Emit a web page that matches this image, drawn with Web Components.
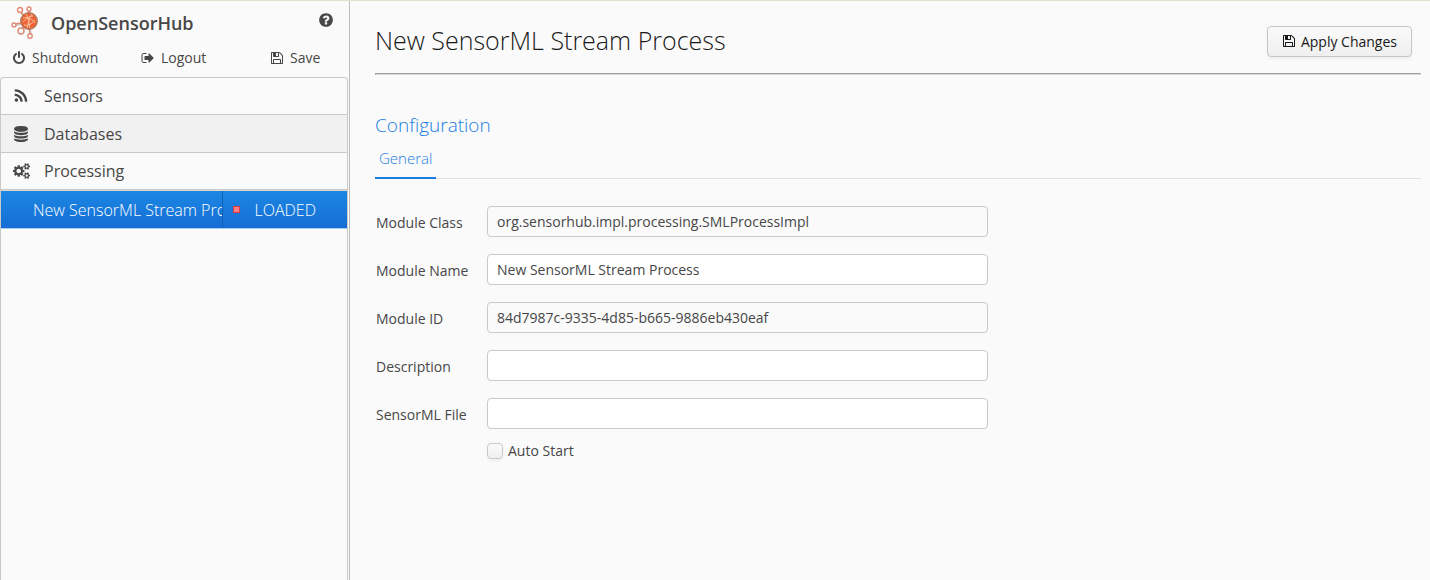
<!DOCTYPE html>
<html lang="en">
<head>
<meta charset="utf-8">
<title>OpenSensorHub</title>
<style>
  html, body {
    height: 100%;
  }

  body {
    margin: 0;
    font-family: "Open Sans", "Noto Sans", sans-serif;
    font-size: 14px;
    color: #474747;
    background: #fafafa;
    --border-color: #c9c9c9;
    --accent: #197de1;
  }
</style>
</head>
<body>
<hub-app>
  <hub-sidebar slot="sidebar" title="OpenSensorHub">
    <hub-section icon="rss" label="Sensors"></hub-section>
    <hub-section icon="database" label="Databases" shaded></hub-section>
    <hub-section icon="cogs" label="Processing">
      <hub-module-list name="New SensorML Stream Process" state="LOADED"></hub-module-list>
    </hub-section>
  </hub-sidebar>

  <hub-page-header title="New SensorML Stream Process"></hub-page-header>
  <hub-tabs title="Configuration" tab="General">
    <hub-field label="Module Class" value="org.sensorhub.impl.processing.SMLProcessImpl" readonly></hub-field>
    <hub-field label="Module Name" value="New SensorML Stream Process"></hub-field>
    <hub-field label="Module ID" value="84d7987c-9335-4d85-b665-9886eb430eaf" readonly></hub-field>
    <hub-field label="Description"></hub-field>
    <hub-field label="SensorML File"></hub-field>
    <hub-checkbox label="Auto Start"></hub-checkbox>
  </hub-tabs>
</hub-app>

<script>
// Icon shapes: [viewBox width, path]. All of them are 1792 units tall.
const ICONS = {
  power: [1792, "M1664 896q0 156-61 298t-164 245-245 164-298 61-298-61-245-164-164-245-61-298q0-182 80.5-343t226.5-270q43-32 95.5-25t83.5 50q32 42 24.5 94.5t-49.5 84.5q-98 74-151.5 181t-53.5 228q0 104 40.5 198.5t109.5 163.5 163.5 109.5 198.5 40.5 198.5-40.5 163.5-109.5 109.5-163.5 40.5-198.5q0-121-53.5-228t-151.5-181q-42-32-49.5-84.5t24.5-94.5q31-43 84-50t95 25q146 109 226.5 270t80.5 343zm-640-768v640q0 52-38 90t-90 38-90-38-38-90v-640q0-52 38-90t90-38 90 38 38 90z"],
  logout: [1792, "M704 1440q0 4 1 20t.5 26.5-3 23.5-10 19.5-20.5 6.5h-320q-119 0-203.5-84.5t-84.5-203.5v-704q0-119 84.5-203.5t203.5-84.5h320q13 0 22.5 9.5t9.5 22.5q0 4 1 20t.5 26.5-3 23.5-10 19.5-20.5 6.5h-320q-66 0-113 47t-47 113v704q0 66 47 113t113 47h312l11.5 1 11.5 3 8 5.5 7 9 2 13.5zm928-544q0 26-19 45l-544 544q-19 19-45 19t-45-19-19-45v-288h-448q-26 0-45-19t-19-45v-384q0-26 19-45t45-19h448v-288q0-26 19-45t45-19 45 19l544 544q19 19 19 45z"],
  save: [1792, "M512 1536h768v-384h-768v384zm896 0h128v-896q0-14-10-38.5t-20-34.5l-281-281q-10-10-34-20t-39-10v416q0 40-28 68t-68 28h-576q-40 0-68-28t-28-68v-416h-128v1280h128v-416q0-40 28-68t68-28h832q40 0 68 28t28 68v416zm-384-928v-320q0-13-9.5-22.5t-22.5-9.5h-192q-13 0-22.5 9.5t-9.5 22.5v320q0 13 9.5 22.5t22.5 9.5h192q13 0 22.5-9.5t9.5-22.5zm640 32v928q0 40-28 68t-68 28h-1344q-40 0-68-28t-28-68v-1344q0-40 28-68t68-28h928q40 0 88 20t76 48l280 280q28 28 48 76t20 88z"],
  help: [1792, "M1024 1376v-192q0-14-9-23t-23-9h-192q-14 0-23 9t-9 23v192q0 14 9 23t23 9h192q14 0 23-9t9-23zm256-672q0-88-55.5-163t-138.5-116-170-41q-243 0-371 213-15 24 8 42l132 100q7 6 19 6 16 0 25-12 53-68 86-92 34-24 86-24 48 0 85.5 26t37.5 59q0 38-20 61t-68 45q-63 28-115.5 86.5t-52.5 125.5v36q0 14 9 23t23 9h192q14 0 23-9t9-23q0-19 21.5-49.5t54.5-49.5q32-18 49-28.5t46-35 44.5-48 28-60.5 12.5-81zm384 192q0 209-103 385.5t-279.5 279.5-385.5 103-385.5-103-279.5-279.5-103-385.5 103-385.5 279.5-279.5 385.5-103 385.5 103 279.5 279.5 103 385.5z"],
  rss: [1792, "M576 1344q0 80-56 136t-136 56-136-56-56-136 56-136 136-56 136 56 56 136zm512 123q2 28-17 48-18 21-47 21h-135q-25 0-43-16.5t-20-41.5q-22-229-184.5-391.5t-391.5-184.5q-25-2-41.5-20t-16.5-43v-135q0-29 21-47 17-17 43-17h5q160 13 306 80.5t259 181.5q114 113 181.5 259t80.5 306zm512 2q2 27-18 47-18 20-46 20h-143q-26 0-44.5-17.5t-19.5-42.5q-12-215-101-408.5t-231.5-336-336-231.5-408.5-102q-25-1-42.5-19.5t-17.5-43.5v-143q0-28 20-46 18-18 44-18h3q262 13 501.5 120t425.5 294q187 186 294 425.5t120 501.5z"],
  database: [1792, "M896 768q237 0 443-43t325-127v170q0 69-103 128t-280 93.5-385 34.5-385-34.5-280-93.5-103-128v-170q119 84 325 127t443 43zm0 768q237 0 443-43t325-127v170q0 69-103 128t-280 93.5-385 34.5-385-34.5-280-93.5-103-128v-170q119 84 325 127t443 43zm0-384q237 0 443-43t325-127v170q0 69-103 128t-280 93.5-385 34.5-385-34.5-280-93.5-103-128v-170q119 84 325 127t443 43zm0-1152q208 0 385 34.5t280 93.5 103 128v128q0 69-103 128t-280 93.5-385 34.5-385-34.5-280-93.5-103-128v-128q0-69 103-128t280-93.5 385-34.5z"],
  cogs: [1920, "M896 896q0-106-75-181t-181-75-181 75-75 181 75 181 181 75 181-75 75-181zm768 512q0-52-38-90t-90-38-90 38-38 90q0 53 37.5 90.5t90.5 37.5 90.5-37.5 37.5-90.5zm0-1024q0-52-38-90t-90-38-90 38-38 90q0 53 37.5 90.5t90.5 37.5 90.5-37.5 37.5-90.5zm-384 421v185q0 10-7 19.5t-16 10.5l-155 24q-11 35-32 76 34 48 90 115 7 11 7 20 0 12-7 19-23 30-82.5 89.5t-78.5 59.5q-11 0-21-7l-115-90q-37 19-77 31-11 108-23 155-7 24-30 24h-186q-11 0-20-7.5t-10-17.5l-23-153q-34-10-75-31l-118 89q-7 7-20 7-11 0-21-8-144-133-144-160 0-9 7-19 10-14 41-53t47-61q-23-44-35-82l-152-24q-10-1-17-9.5t-7-19.5v-185q0-10 7-19.5t16-10.5l155-24q11-35 32-76-34-48-90-115-7-11-7-20 0-12 7-20 22-30 82-89t79-59q11 0 21 7l115 90q34-18 77-32 11-108 23-154 7-24 30-24h186q11 0 20 7.5t10 17.5l23 153q34 10 75 31l118-89q8-7 20-7 11 0 21 8 144 133 144 160 0 8-7 19-12 16-42 54t-45 60q23 48 34 82l152 23q10 2 17 10.5t7 19.5zm640 533v140q0 16-149 31-12 27-30 52 51 113 51 138 0 4-4 7-122 71-124 71-8 0-46-47t-52-68q-20 2-30 2t-30-2q-14 21-52 68t-46 47q-2 0-124-71-4-3-4-7 0-25 51-138-18-25-30-52-149-15-149-31v-140q0-16 149-31 13-29 30-52-51-113-51-138 0-4 4-7 4-2 35-20t59-34 30-16q8 0 46 46.5t52 67.5q20-2 30-2t30 2q51-71 92-112l6-2q4 0 124 70 4 3 4 7 0 25-51 138 17 23 30 52 149 15 149 31zm0-1024v140q0 16-149 31-12 27-30 52 51 113 51 138 0 4-4 7-122 71-124 71-8 0-46-47t-52-68q-20 2-30 2t-30-2q-14 21-52 68t-46 47q-2 0-124-71-4-3-4-7 0-25 51-138-18-25-30-52-149-15-149-31v-140q0-16 149-31 13-29 30-52-51-113-51-138 0-4 4-7 4-2 35-20t59-34 30-16q8 0 46 46.5t52 67.5q20-2 30-2t30 2q51-71 92-112l6-2q4 0 124 70 4 3 4 7 0 25-51 138 17 23 30 52 149 15 149 31z"]
};

/** Base class: renders the result of template() into an open shadow root. */
class HubElement extends HTMLElement {
  constructor() {
    super();
    this.attachShadow({ mode: "open" });
  }

  connectedCallback() {
    this.shadowRoot.innerHTML = this.template();
  }

  attr(name) {
    return this.getAttribute(name) || "";
  }
}

/** Icon, sized with --icon-size. */
class HubIcon extends HubElement {
  template() {
    const [width, path] = ICONS[this.attr("name")];
    return `
      <style>
        :host { display: inline-flex; flex: none; }
        svg { display: block; height: var(--icon-size, 14px); fill: currentColor; }
      </style>
      <svg viewBox="0 0 ${width} 1792" aria-hidden="true"><path d="${path}"/></svg>
    `;
  }
}

class HubLogo extends HubElement {
  template() {
    return `
      <style>
        :host { display: block; flex: none; }
        svg { display: block; width: 30px; height: 34px; }
      </style>
      <svg viewBox="0 0 30 34" aria-hidden="true">
        <g fill="none" stroke="#b9b3ae" stroke-width="2" opacity=".6">
          <path d="M11 7l4 5M20 5l-1 6M6 19l6-1M12 24l3-4M21 29l-1-6"/>
        </g>
        <g fill="#fafafa" stroke="#df8a74" stroke-width="1.4">
          <path d="M11 6l4 5M19 5l-1 5M5 18l6-1M12 23l3-3M20 28l-1-6"/>
          <circle cx="10" cy="4" r="2.500"/>
          <circle cx="19" cy="3" r="2"/>
          <circle cx="4" cy="19" r="2"/>
          <circle cx="11" cy="25" r="3"/>
          <circle cx="20" cy="30" r="2.200"/>
        </g>
        <circle cx="19" cy="15" r="8.300" fill="#ec6436" stroke="#a8785f" stroke-width="1.200"/>
        <g fill="none" stroke="#ffc9a8" stroke-width=".9">
          <path d="M13 12c4-1 8 0 12 5M14 19c3 1 7 0 11-5M16 8c3 4 3 9 1 14M22 8c-3 4-4 9-2 14M13 16c4-4 7-6 10-6"/>
        </g>
      </svg>
    `;
  }
}

/** Flat icon + text button of the sidebar toolbar. */
class HubLink extends HubElement {
  template() {
    return `
      <style>
        :host { display: block; }
        button {
          display: flex;
          align-items: center;
          gap: 6px;
          padding: 0;
          border: 0;
          background: none;
          font: inherit;
          line-height: 20px;
          color: inherit;
        }
      </style>
      <button type="button"><hub-icon name="${this.attr("icon")}"></hub-icon>${this.attr("label")}</button>
    `;
  }
}

/** Page frame: sidebar on the left, default slot in the content area. */
class HubApp extends HubElement {
  template() {
    return `
      <style>
        :host {
          display: flex;
          box-sizing: border-box;
          min-height: 100%;
          border-top: 1px solid #dbe4d0;
        }
        aside {
          display: flex;
          flex: 0 0 349px;
          border-right: 1px solid #bdbdbd;
        }
        ::slotted(hub-sidebar) { flex: 1; min-width: 0; }
        main {
          flex: 1;
          min-width: 0;
          padding: 16px 9px 16px 25px;
        }
      </style>
      <aside><slot name="sidebar"></slot></aside>
      <main><slot></slot></main>
    `;
  }
}

class HubSidebar extends HubElement {
  template() {
    return `
      <style>
        :host { display: flex; flex-direction: column; }
        header {
          display: flex;
          align-items: center;
          gap: 11px;
          height: 36px;
          margin-top: 4px;
          padding: 0 15px 0 10px;
        }
        h1 { flex: 1; margin: 0; font-size: 18px; font-weight: 600; line-height: 24px; }
        .help {
          align-self: flex-start;
          margin-top: 7px;
          padding: 0;
          border: 0;
          background: none;
          color: inherit;
          --icon-size: 16px;
        }
        .toolbar {
          display: grid;
          grid-template-columns: 129px 129px auto;
          margin: 7px 0 9px;
          padding-left: 12px;
        }
        nav {
          flex: 1;
          margin-right: 1px;
          border: 1px solid var(--border-color);
          border-bottom: 0;
          border-radius: 4px 4px 0 0;
        }
      </style>
      <header>
        <hub-logo></hub-logo>
        <h1>${this.attr("title")}</h1>
        <button class="help" type="button" aria-label="Help"><hub-icon name="help"></hub-icon></button>
      </header>
      <div class="toolbar">
        <hub-link icon="power" label="Shutdown"></hub-link>
        <hub-link icon="logout" label="Logout"></hub-link>
        <hub-link icon="save" label="Save"></hub-link>
      </div>
      <nav><slot></slot></nav>
    `;
  }
}

/** Accordion section; its content goes below the caption. */
class HubSection extends HubElement {
  template() {
    return `
      <style>
        :host { display: block; }
        button {
          display: flex;
          align-items: center;
          width: 100%;
          height: 37px;
          padding: 0 12px;
          border: 0;
          border-bottom: 1px solid var(--border-color);
          background: none;
          font: inherit;
          font-size: 16px;
          color: inherit;
          --icon-size: 16px;
        }
        :host([shaded]) button { height: 38px; background: #f1f1f1; }
        .icon { flex: 0 0 31px; display: flex; }
      </style>
      <button type="button"><span class="icon"><hub-icon name="${this.attr("icon")}"></hub-icon></span>${this.attr("label")}</button>
      <slot></slot>
    `;
  }
}

class HubModuleList extends HubElement {
  template() {
    return `
      <style>
        :host { display: block; border-top: 1px solid #dcd8d2; border-bottom: 1px solid #a9cdf0; }
        table {
          width: 100%;
          table-layout: fixed;
          border-collapse: collapse;
          font-size: 16px;
          font-weight: 300;
          color: #fff;
        }
        tr { height: 37px; background: linear-gradient(#1b87e3, #166ed5); }
        td { padding: 0; overflow: hidden; white-space: nowrap; }
        .name { padding-left: 32px; }
        .state { width: 125px; border-left: 1px solid #1461b4; box-sizing: border-box; }
        .status { display: flex; align-items: center; gap: 15px; padding-left: 10px; }
        .dot {
          width: 7px;
          height: 7px;
          box-sizing: border-box;
          border: 1px solid #d93a45;
          background: #f58088;
        }
      </style>
      <table>
        <tbody>
          <tr>
            <td class="name">${this.attr("name")}</td>
            <td class="state"><div class="status"><span class="dot"></span>${this.attr("state")}</div></td>
          </tr>
        </tbody>
      </table>
    `;
  }
}

class HubPageHeader extends HubElement {
  template() {
    return `
      <style>
        :host { display: block; }
        .bar {
          display: flex;
          align-items: center;
          justify-content: space-between;
          height: 48px;
          padding-right: 9px;
        }
        h2 { margin: 0; padding-bottom: 2px; font-size: 25px; font-weight: 300; color: #191919; }
        button {
          display: flex;
          align-items: center;
          gap: 5px;
          height: 31px;
          padding: 0 14px;
          border: 1px solid #c5c5c5;
          border-radius: 4px;
          background: linear-gradient(#fafafa, #efefef);
          box-shadow: 0 2px 3px rgba(0, 0, 0, .05);
          font: inherit;
          color: #191919;
        }
        hr {
          margin: 8px 0 0;
          border: 1px solid;
          border-color: #9f9f9f #d8d8d8 #d8d8d8 #9f9f9f;
        }
      </style>
      <div class="bar">
        <h2>${this.attr("title")}</h2>
        <button type="button"><hub-icon name="save"></hub-icon>Apply Changes</button>
      </div>
      <hr>
    `;
  }
}

/** Titled tab sheet holding the form. */
class HubTabs extends HubElement {
  template() {
    return `
      <style>
        :host { display: block; margin-top: 36px; }
        h3 { margin: 0; font-size: 19px; font-weight: 300; line-height: 28px; color: var(--accent); }
        .tabs { display: flex; margin-top: 4px; border-bottom: 1px solid #dfdfdf; }
        .tab {
          height: 36px;
          margin-bottom: -1px;
          padding: 0 4px 4px;
          border: 0;
          border-bottom: 2px solid var(--accent);
          background: none;
          font: inherit;
          font-size: 15px;
          font-weight: 300;
          color: var(--accent);
        }
        form { display: grid; gap: 17px; margin-top: 27px; }
      </style>
      <h3>${this.attr("title")}</h3>
      <div class="tabs" role="tablist">
        <button class="tab" type="button" role="tab" aria-selected="true">${this.attr("tab")}</button>
      </div>
      <form><slot></slot></form>
    `;
  }
}

/** Labelled text box. */
class HubField extends HubElement {
  template() {
    const readonly = this.hasAttribute("readonly") ? "readonly" : "";
    return `
      <style>
        :host {
          display: grid;
          grid-template-columns: 112px minmax(0, 501px);
          align-items: center;
        }
        label { padding: 2px 0 0 1px; }
        input {
          box-sizing: border-box;
          width: 100%;
          height: 31px;
          padding: 0 9px 1px;
          border: 1px solid var(--border-color);
          border-radius: 4px;
          background: #fff;
          font: inherit;
          color: inherit;
        }
        input[readonly] { background: #fafafa; }
      </style>
      <label for="input">${this.attr("label")}</label>
      <input id="input" type="text" value="${this.attr("value")}" ${readonly}>
    `;
  }
}

class HubCheckbox extends HubElement {
  template() {
    return `
      <style>
        :host { display: block; margin-top: -5px; padding-left: 112px; }
        label { display: inline-flex; align-items: center; gap: 5px; line-height: 20px; }
        input {
          appearance: none;
          width: 16px;
          height: 16px;
          margin: 0;
          border: 1px solid var(--border-color);
          border-radius: 4px;
          background: linear-gradient(#fafafa, #efefef);
          box-shadow: 0 2px 3px rgba(0, 0, 0, .05);
        }
      </style>
      <label><input type="checkbox">${this.attr("label")}</label>
    `;
  }
}

customElements.define("hub-icon", HubIcon);
customElements.define("hub-logo", HubLogo);
customElements.define("hub-link", HubLink);
customElements.define("hub-app", HubApp);
customElements.define("hub-sidebar", HubSidebar);
customElements.define("hub-section", HubSection);
customElements.define("hub-module-list", HubModuleList);
customElements.define("hub-page-header", HubPageHeader);
customElements.define("hub-tabs", HubTabs);
customElements.define("hub-field", HubField);
customElements.define("hub-checkbox", HubCheckbox);
</script>
</body>
</html>
